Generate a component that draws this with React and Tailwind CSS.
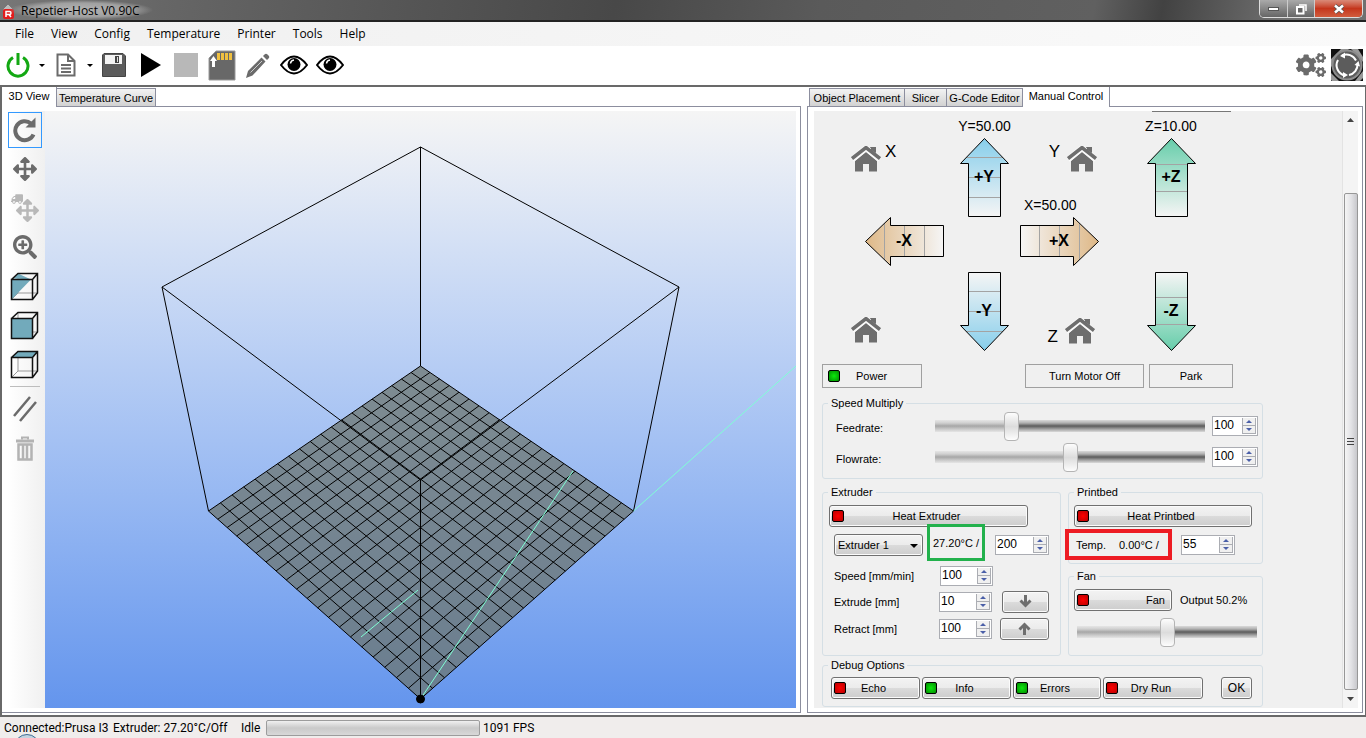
import { useState } from 'react';
import { FaArrowsAlt, FaCogs, FaSearchPlus, FaTruck } from 'react-icons/fa';

const MENU_ITEMS = ['File', 'View', 'Config', 'Temperature', 'Printer', 'Tools', 'Help'];

const AERO =
  'rounded-[3px] border border-[#707070] bg-[linear-gradient(#f3f3f3_0%,#ebebeb_50%,#dbdbdb_50%,#cdcdcd_100%)] shadow-[inset_0_0_0_1px_#fbfbfb]';

// Print bed corners on the canvas: front, right, back, left
const BED = [[375.5, 588], [588.5, 400], [375.5, 255], [163.5, 400]];

// Perspective map from the unit square to the bed quad
function project(u, v) {
  const [[x0, y0], [x1, y1], [x2, y2], [x3, y3]] = BED;
  const dx1 = x1 - x2;
  const dx2 = x3 - x2;
  const dx3 = x0 - x1 + x2 - x3;
  const dy1 = y1 - y2;
  const dy2 = y3 - y2;
  const dy3 = y0 - y1 + y2 - y3;
  const det = dx1 * dy2 - dx2 * dy1;
  const g = (dx3 * dy2 - dx2 * dy3) / det;
  const h = (dx1 * dy3 - dx3 * dy1) / det;
  const w = g * u + h * v + 1;
  return [
    ((x1 - x0 + g * x1) * u + (x3 - x0 + h * x3) * v + x0) / w,
    ((y1 - y0 + g * y1) * u + (y3 - y0 + h * y3) * v + y0) / w,
  ];
}

const GRID = Array.from({ length: 21 }).flatMap((_, i) => {
  const t = i / 20;
  return [
    [project(t, 0), project(t, 1)],
    [project(0, t), project(1, t)],
  ];
});

function Viewport() {
  return (
    <div className="min-w-0 flex-1 bg-linear-to-b from-[#f5f5f5] to-[#6495ed]">
      <svg viewBox="0 0 751 597" className="block w-full" stroke="#000" fill="none">
        <polygon points={BED.map((p) => p.join(',')).join(' ')} fill="#6c7570" fillOpacity="0.75" stroke="none" />
        {GRID.map(([a, b], i) => (
          <line key={i} x1={a[0]} y1={a[1]} x2={b[0]} y2={b[1]} />
        ))}
        <path d="M375.5 36 L117 176 L375.5 369 L634 176 Z M375.5 36 V255 M117 176 L163.5 400 M634 176 L588.5 400 M375.5 369 V588" />
        <path d="M588.5 400 L751 255 M375.5 588 L528 360 M316 526 L373 479" stroke="#7fffd4" />
        <circle cx="375.5" cy="588" r="4" fill="#000" />
      </svg>
    </div>
  );
}

function Home() {
  return (
    <svg width="30" height="26" viewBox="0 0 30 26" fill="#6e6e6e">
      <path d="M19 1 h6 v9 l-6 -5z" />
      <path d="M15 6 L26 15 V25.500 H18 V18 H12 V25.500 H4 V15 Z" />
      <path d="M1 13.500 L15 2 L29 13.500" fill="none" stroke="#fafafa" strokeWidth="6" />
      <path d="M1 12.500 L15 1.500 L29 12.500" fill="none" stroke="#6e6e6e" strokeWidth="3.500" />
      <path d="M20 1 h5 v6 l-5 -3z" />
    </svg>
  );
}

function HomeButton({ axis, className = '', labelClass = '', before = false }) {
  return (
    <button type="button" aria-label={`Home ${axis}`} className={`flex gap-[4px] ${className}`}>
      {before && <span className={`text-[17px] leading-5 ${labelClass}`}>{axis}</span>}
      <Home />
      {!before && axis !== 'all' && <span className={`text-[17px] leading-5 ${labelClass}`}>{axis}</span>}
    </button>
  );
}

const UP = '24.5,0.5 48.5,25.5 40.5,25.5 40.5,78.5 8.5,78.5 8.5,25.5 0.5,25.5';
const DOWN = '24.5,78.5 48.5,53.5 40.5,53.5 40.5,0.5 8.5,0.5 8.5,53.5 0.5,53.5';
const LEFT = '0.5,24.5 25.5,0.5 25.5,8.5 78.5,8.5 78.5,39.5 25.5,39.5 25.5,48.5';
const RIGHT = '78.5,24.5 53.5,0.5 53.5,8.5 0.5,8.5 0.5,39.5 53.5,39.5 53.5,48.5';

function Jog({ dir, label, color, marks, id }) {
  const vertical = dir === 'up' || dir === 'down';
  const points = { up: UP, down: DOWN, left: LEFT, right: RIGHT }[dir];
  const w = vertical ? 49 : 79;
  const h = vertical ? 79 : 49;
  const reversed = dir === 'down' || dir === 'right';
  const ends = reversed ? ['#f5f5f5', color] : [color, '#f5f5f5'];
  return (
    <button type="button" aria-label={`Move ${label}`} className="block">
      <svg width={w} height={h} viewBox={`0 0 ${w} ${h}`}>
        <defs>
          <linearGradient id={id} x1="0" y1="0" x2={vertical ? 0 : 1} y2={vertical ? 1 : 0}>
            <stop offset="0" stopColor={ends[0]} />
            <stop offset="1" stopColor={ends[1]} />
          </linearGradient>
          <clipPath id={`${id}-clip`}>
            <polygon points={points} />
          </clipPath>
        </defs>
        <polygon points={points} fill={`url(#${id})`} />
        <g clipPath={`url(#${id}-clip)`} stroke="#a3a3a3">
          {marks.map((m) =>
            vertical ? (
              <line key={m} x1="0" x2="49" y1={m + 0.5} y2={m + 0.5} />
            ) : (
              <line key={m} y1="0" y2="49" x1={m + 0.5} x2={m + 0.5} />
            ),
          )}
        </g>
        <polygon points={points} fill="none" stroke="#000" />
        <text x={vertical ? 24 : 39} y={vertical ? 44 : 29} textAnchor="middle" fontSize="16" fontWeight="700">
          {label}
        </text>
      </svg>
    </button>
  );
}

function Led({ on = false }) {
  return (
    <span
      className={`size-3 shrink-0 rounded-[2px] border border-black ${
        on ? 'bg-[radial-gradient(#0ce80c,#008c00)]' : 'bg-[radial-gradient(#ff0000,#b80000)]'
      }`}
    />
  );
}

function LedButton({ on, children, className = '' }) {
  return (
    <button type="button" className={`flex h-[22px] items-center pr-[18px] pl-[2px] ${AERO} ${className}`}>
      <Led on={on} />
      <span className="flex-1 text-center">{children}</span>
    </button>
  );
}

function Spin({ label, value, className = '' }) {
  const [text, setText] = useState(value);
  const step = (n) => setText(String(Number(text) + n));
  return (
    <div className={`flex h-5 shrink-0 border border-[#abadb3] bg-white ${className}`}>
      <input
        aria-label={label}
        value={text}
        onChange={(e) => setText(e.target.value)}
        className="h-4 w-0 min-w-0 flex-1 bg-transparent pl-px text-[12px] outline-none"
      />
      <div className="m-px flex w-[14px] flex-col border border-t-0 border-[#abadb3] bg-[#f0f0f0]">
        <button type="button" aria-label={`${label} up`} onClick={() => step(1)} className="flex flex-1 items-center justify-center border-b border-[#abadb3]">
          <svg width="6" height="3" viewBox="0 0 6 3" fill="#4a5fa8"><path d="M0 3 L3 0 L6 3z" /></svg>
        </button>
        <button type="button" aria-label={`${label} down`} onClick={() => step(-1)} className="flex flex-1 items-center justify-center">
          <svg width="6" height="3" viewBox="0 0 6 3" fill="#4a5fa8"><path d="M0 0 L3 3 L6 0z" /></svg>
        </button>
      </div>
    </div>
  );
}

function Slider({ id, label, initial, className = '' }) {
  const [value, setValue] = useState(initial);
  return (
    <input
      id={id}
      aria-label={label}
      type="range"
      value={value}
      onChange={(e) => setValue(Number(e.target.value))}
      style={{ '--pos': `${value}%` }}
      className={`h-[29px] shrink-0 appearance-none bg-transparent [&::-webkit-slider-runnable-track]:h-3 [&::-webkit-slider-runnable-track]:bg-[linear-gradient(to_right,rgba(240,240,240,0.5)_var(--pos),transparent_var(--pos)),linear-gradient(#dadada,#b0b0b0_25%,#5c5c5c_50%,#a0a0a0_75%,#dadada)] [&::-webkit-slider-thumb]:-mt-2 [&::-webkit-slider-thumb]:h-[29px] [&::-webkit-slider-thumb]:w-[15px] [&::-webkit-slider-thumb]:appearance-none [&::-webkit-slider-thumb]:rounded-[4px] [&::-webkit-slider-thumb]:border [&::-webkit-slider-thumb]:border-[#b4b4b4] [&::-webkit-slider-thumb]:bg-[linear-gradient(#fdfdfd,#dcdcdc_50%,#fdfdfd)] ${className}`}
    />
  );
}

function Group({ title, className = '', children }) {
  return (
    <fieldset className={`min-w-0 rounded-[3px] border border-[#d5dfe5] ${className}`}>
      <legend className="ml-[5px] h-[14px] px-[3px] leading-[14px]">{title}</legend>
      {children}
    </fieldset>
  );
}

function Tab({ children, active = false, className = '' }) {
  return (
    <button
      type="button"
      role="tab"
      aria-selected={active}
      className={`border-[#8c8e9e] text-center whitespace-nowrap ${
        active
          ? 'relative z-10 -mb-px h-5 border-r bg-white pb-[3px]'
          : 'h-[18px] border-t border-r border-l bg-linear-to-b from-[#f3f3f3] to-[#d2d2d2]'
      } ${className}`}
    >
      {children}
    </button>
  );
}

function Eye() {
  return (
    <svg width="28" height="20" viewBox="0 0 28 20">
      <path d="M1 10 Q14 -7 27 10 Q14 27 1 10Z" fill="#fff" stroke="#000" strokeWidth="2" />
      <circle cx="14" cy="9.500" r="6.500" />
      <path d="M10.500 8.500 A4 4 0 0 1 14 5" fill="none" stroke="#fff" strokeWidth="1.500" />
    </svg>
  );
}

function Caret() {
  return (
    <svg width="6" height="3" viewBox="0 0 6 3"><path d="M0 0 H6 L3 3z" /></svg>
  );
}

function Cube({ shade }) {
  return (
    <svg width="29" height="29" viewBox="0 0 29 29" fill="none">
      <path d="M8 1.500 V21 H28 M8 21 L1.500 27.500" stroke="#999" />
      <path d={shade} fill="#72aabb" />
      <path d="M1.500 7.500 H22.500 V27.500 H1.500Z M1.500 7.500 L8 1.500 H27.500 V21 L22.500 27.500 M22.500 7.500 L27.500 1.500" stroke="#111" strokeWidth="1.500" />
    </svg>
  );
}

function Estop() {
  return (
    <svg width="32" height="32" viewBox="0 0 32 32">
      <rect width="32" height="32" fill="#111" />
      <path d="M0 10 L10 0 H18 L0 18z M20 0 H27 L32 8 V13z M0 24 L8 32 H1 L0 31z M24 32 L32 22 V29 L29 32z" fill="#999" />
      <circle cx="16" cy="16" r="14.500" fill="#5c5c5c" stroke="#8c8c8c" strokeWidth="2" />
      <g fill="none" stroke="#fff" strokeWidth="2">
        <path d="M11 6.500 A10.500 10.500 0 0 1 25 11.500" />
        <path d="M26.500 15 A10.500 10.500 0 0 1 18 26" />
        <path d="M14 26.500 A10.500 10.500 0 0 1 7 11" />
      </g>
      <path d="M9 7 L14 3.500 V9.500z M27.500 12 L29 17.500 L23.500 16z M12 23 L17 26 L12 29z" fill="#fff" />
    </svg>
  );
}

function TitleBar() {
  return (
    <header className="flex h-[22px] items-start border-b-2 border-[#222] bg-[linear-gradient(100deg,#777_0%,#666_12%,#555_30%,#484848_45%,#5a5a5a_60%,#606060_80%,#424242_85%,#707070_94%)]">
      <svg width="14" height="16" viewBox="0 0 14 16" className="mt-1 ml-px">
        <path d="M2 5 L7 0 L12 5 V13 H2Z" fill="#bbb" stroke="#777" />
        <rect x="2" y="5" width="11" height="10" rx="2" fill="#e31b1b" />
        <path d="M5 13 V7.500 H8.500 Q10 7.500 10 9 Q10 10.500 8.500 10.500 H5 M8 10.500 L10 13" fill="none" stroke="#fff" strokeWidth="1.500" />
      </svg>
      <h1 className="-ml-[7px] bg-[radial-gradient(closest-side,#b4b4b4,#a0a0a0_70%,transparent)] px-[13px] pt-[2px] font-['Open_Sans',sans-serif] text-[12px] leading-[18px] text-black">
        Repetier-Host V0.90C
      </h1>
      <div className="mr-[3px] ml-auto flex h-[18px] overflow-hidden rounded-b-[5px] border border-t-0 border-[#ddd]">
        <button type="button" aria-label="Minimize" className="flex w-7 items-center justify-center border-r border-[#ccc] bg-linear-to-b from-[#aaa] to-[#666]">
          <svg width="11" height="4" viewBox="0 0 11 4"><rect x="0.500" y="0.500" width="10" height="3" fill="#fff" stroke="#555" /></svg>
        </button>
        <button type="button" aria-label="Restore" className="flex w-[27px] items-center justify-center border-r border-[#ccc] bg-linear-to-b from-[#aaa] to-[#666]">
          <svg width="12" height="12" viewBox="0 0 12 12" fill="#666" stroke="#fff" strokeWidth="2">
            <path d="M4 2 H11 V8" fill="none" strokeWidth="1.500" />
            <rect x="2" y="4" width="6.500" height="6.500" />
          </svg>
        </button>
        <button type="button" aria-label="Close" className="flex w-[47px] items-center justify-center bg-linear-to-b from-[#d98a78] via-[#c4351b] to-[#d15c3d]">
          <svg width="12" height="10" viewBox="0 0 12 10">
            <path d="M2 1.500 L10 8.500 M10 1.500 L2 8.500" stroke="#555" strokeWidth="4" />
            <path d="M2 1.500 L10 8.500 M10 1.500 L2 8.500" stroke="#fff" strokeWidth="2.500" />
          </svg>
        </button>
      </div>
    </header>
  );
}

function Toolbar() {
  return (
    <div className="flex h-[38px] items-center pl-[6px]">
      <button type="button" aria-label="Connect">
        <svg width="24" height="26" viewBox="0 0 24 26" fill="none" stroke="#13a813" strokeWidth="3">
          <path d="M7 5.500 A10 10 0 1 0 17 5.500 M12 1 V13" />
        </svg>
      </button>
      <button type="button" aria-label="Connect options" className="ml-[9px]"><Caret /></button>
      <button type="button" aria-label="Load" className="ml-[11px]">
        <svg width="20" height="24" viewBox="0 0 20 24" fill="none" stroke="#6b6b6b" strokeWidth="2">
          <path d="M1.500 1.500 H12 L18.500 8 V22.500 H1.500Z M12 1.500 V8 H18.500 M5 12 H15 M5 15.500 H15 M5 19 H15" />
        </svg>
      </button>
      <button type="button" aria-label="Load options" className="ml-[11px]"><Caret /></button>
      <button type="button" aria-label="Save" className="ml-[9px]">
        <svg width="24" height="24" viewBox="0 0 24 24">
          <path d="M2 0.500 H21 L23.500 3 V23.500 H0.500 V2Z" fill="#5c5c5c" stroke="#444" />
          <rect x="3" y="2" width="17" height="9" fill="#f4f4f4" />
          <rect x="13" y="3" width="4" height="7" fill="#444" />
          <rect x="15" y="4" width="1" height="5" fill="#ddd" />
        </svg>
      </button>
      <button type="button" aria-label="Run" className="ml-[15px]">
        <svg width="20" height="24" viewBox="0 0 20 24"><path d="M0 0 L20 12 L0 24z" /></svg>
      </button>
      <button type="button" aria-label="Stop" className="ml-[13px] size-6 bg-[#b8b8b8]" />
      <button type="button" aria-label="SD card" className="ml-[10px]">
        <svg width="28" height="31" viewBox="0 0 28 31">
          <path d="M8 1 H27 V30 H1 V8Z" fill="#686868" stroke="#999" />
          <path d="M10.500 3 V10 M14.500 3 V10 M18.500 3 V10 M22.500 3 V10" stroke="#f0c040" strokeWidth="3" />
          <path d="M5.500 6 L9 11 H7 V17 H4 V11 H2z" fill="#fff" />
        </svg>
      </button>
      <button type="button" aria-label="Edit" className="ml-[10px]">
        <svg width="24" height="25" viewBox="0 0 24 25" fill="#6b6b6b">
          <path d="M0 25 L2 18 L15.500 4.500 L19.500 8.500 L6.500 22.500z M17 3 L18.500 1.500 Q20 0 21.500 1.500 L22.500 2.500 Q24 4 22.500 5.500 L21 7z" />
          <path d="M4.500 19.500 L16 8" stroke="#ccc" />
        </svg>
      </button>
      <button type="button" aria-label="Show filament" className="ml-[10px]"><Eye /></button>
      <button type="button" aria-label="Show travel" className="ml-2"><Eye /></button>
      <button type="button" aria-label="Printer settings" className="mr-[5px] ml-auto text-[#6b6b6b]"><FaCogs size={30} /></button>
      <button type="button" aria-label="Emergency stop" className="mr-[3px]"><Estop /></button>
    </div>
  );
}

function ViewTools() {
  const item = 'flex h-9 w-[33px] items-center justify-center';
  return (
    <div className="flex w-[37px] shrink-0 flex-col gap-[3px] bg-linear-to-r from-white to-[#f0f0f0] pt-px text-[#6b6b6b]">
      <button type="button" aria-label="Rotate" className="flex h-9 w-[34px] items-center justify-center border border-[#3399ff]">
        <svg width="24" height="26" viewBox="0 0 24 26">
          <path d="M20.500 17.500 A9.500 9.500 0 1 1 18 6.500" fill="none" stroke="currentColor" strokeWidth="4" />
          <path d="M22.500 0.500 V10.500 H12.500z" fill="currentColor" />
        </svg>
      </button>
      <button type="button" aria-label="Move camera" className={item}><FaArrowsAlt size={24} /></button>
      <button type="button" aria-label="Move object" className={`${item} relative text-[#b8b8b8]`}>
        <FaTruck size={12} className="absolute top-[3px] left-[3px] -scale-x-100" />
        <FaArrowsAlt size={23} className="mt-1 ml-[6px]" />
      </button>
      <button type="button" aria-label="Zoom" className={item}><FaSearchPlus size={24} /></button>
      <button type="button" aria-label="Isometric view" className={item}>
        <Cube shade="M1.500 7.500 H21 L1.500 27.500Z M3 6.500 L8 1.500 L21 7.500Z" />
      </button>
      <button type="button" aria-label="Front view" className={item}><Cube shade="M1.500 7.500 H22.500 V27.500 H1.500Z" /></button>
      <button type="button" aria-label="Top view" className={item}><Cube shade="M1.500 7.500 L8 1.500 H27.500 L22.500 7.500Z" /></button>
      <hr className="my-px ml-[2px] w-[30px] border-[#bdbdbd]" />
      <button type="button" aria-label="Parallel projection" className={item}>
        <svg width="24" height="26" viewBox="0 0 24 26" stroke="currentColor" strokeWidth="2.500">
          <path d="M1 20 L17 1 M7 25 L23 6" />
        </svg>
      </button>
      <button type="button" aria-label="Delete" className={`${item} text-[#b3b3b3]`}>
        <svg width="18" height="25" viewBox="0 0 18 25" fill="none" stroke="currentColor">
          <path d="M0 5 H18" strokeWidth="3" />
          <path d="M6 3.500 V1.500 H12 V3.500" strokeWidth="2" />
          <path d="M2.500 8.500 V23.500 H15.500 V8.500Z M7 9 V23 M11 9 V23" strokeWidth="2.500" />
        </svg>
      </button>
    </div>
  );
}

function JogPanel() {
  return (
    <div className="flex h-[252px] pl-[29px] text-[14px]">
      <div className="flex w-[93px] flex-col pt-[34px]">
        <HomeButton axis="X" labelClass="-mt-1" />
        <div className="mt-[45px] self-end">
          <Jog dir="left" label="-X" color="#deb887" marks={[19, 39, 59]} id="xm" />
        </div>
        <HomeButton axis="all" className="mt-[51px]" />
      </div>
      <div className="ml-[5px] flex w-[71px] flex-col items-center pt-1">
        <p className="mb-[2px] leading-5">Y=50.00</p>
        <Jog dir="up" label="+Y" color="#87ceeb" marks={[19, 39, 59]} id="yp" />
        <div className="mt-[55px]">
          <Jog dir="down" label="-Y" color="#87ceeb" marks={[19, 39, 59]} id="ym" />
        </div>
      </div>
      <div className="flex w-[80px] flex-col pt-[34px]">
        <HomeButton axis="Y" before className="mr-[3px] self-end" labelClass="-mt-1 mr-[3px]" />
        <p className="mt-[23px] ml-1 leading-5">X=50.00</p>
        <div className="mt-[2px]">
          <Jog dir="right" label="+X" color="#deb887" marks={[19, 39, 59]} id="xp" />
        </div>
        <HomeButton axis="Z" before className="mt-[52px] mr-[5px] self-end" labelClass="mt-[9px] mr-[3px]" />
      </div>
      <div className="ml-[41px] flex w-[60px] flex-col items-center pt-1">
        <p className="mb-[2px] leading-5">Z=10.00</p>
        <Jog dir="up" label="+Z" color="#66cdaa" marks={[26, 53]} id="zp" />
        <div className="mt-[55px]">
          <Jog dir="down" label="-Z" color="#66cdaa" marks={[25, 52]} id="zm" />
        </div>
      </div>
    </div>
  );
}

function ExtruderGroup() {
  return (
    <Group title="Extruder" className="h-[171px] w-[239px]">
      <LedButton className="mt-[6px] ml-[6px] w-[199px]">Heat Extruder</LedButton>
      <div className="-mt-[3px] flex h-[37px] items-center">
        <div className={`relative mt-1 ml-[11px] h-[22px] w-[89px] ${AERO}`}>
          <select aria-label="Extruder" className="h-full w-full appearance-none pl-[3px] leading-5">
            <option>Extruder 1</option>
          </select>
          <svg width="8" height="4" viewBox="0 0 8 4" className="pointer-events-none absolute top-[9px] right-1"><path d="M0 0 H8 L4 4z" /></svg>
        </div>
        <output className="ml-1 flex h-[37px] w-[58px] items-center justify-center border-[3px] border-[#22b14c] whitespace-nowrap">
          27.20°C /
        </output>
        <Spin label="Extruder target" value="200" className="mt-1 ml-[10px] w-[54px]" />
      </div>
      <div className="mt-[2px] flex h-[26px] items-center pl-[11px]">
        <span className="w-[106px]">Speed [mm/min]</span>
        <Spin label="Speed" value="100" className="w-[53px]" />
      </div>
      <div className="flex h-[25px] items-center pl-[11px]">
        <span className="w-[105px]">Extrude [mm]</span>
        <Spin label="Extrude" value="10" className="w-[53px]" />
        <button type="button" aria-label="Extrude now" className={`ml-[10px] flex h-[22px] w-[47px] items-center justify-center ${AERO}`}>
          <svg width="13" height="13" viewBox="0 0 13 13" fill="none" stroke="#6e6e6e" strokeWidth="3"><path d="M6.500 0 V10 M1.500 5.500 L6.500 10.500 L11.500 5.500" /></svg>
        </button>
      </div>
      <div className="flex h-[29px] items-center pl-[11px]">
        <span className="w-[105px]">Retract [mm]</span>
        <Spin label="Retract" value="100" className="w-[53px]" />
        <button type="button" aria-label="Retract now" className={`ml-2 flex h-[22px] w-[49px] items-center justify-center ${AERO}`}>
          <svg width="13" height="13" viewBox="0 0 13 13" fill="none" stroke="#6e6e6e" strokeWidth="3"><path d="M6.500 13 V3 M1.500 7.500 L6.500 2.500 L11.500 7.500" /></svg>
        </button>
      </div>
    </Group>
  );
}

function ManualControl() {
  return (
    <div className="flex min-w-0 flex-1 flex-col bg-[#f0f0f0] pl-2">
      <div className="ml-[330px] h-px w-[79px] bg-[#777]" />
      <JogPanel />
      <div className="flex h-6">
        <button type="button" className="flex w-[100px] items-center border border-[#a0a0a0] pl-[5px]">
          <Led on />
          <span className="ml-4">Power</span>
        </button>
        <button type="button" className="ml-[103px] w-[119px] border border-[#a0a0a0]">Turn Motor Off</button>
        <button type="button" className="ml-[5px] w-[84px] border border-[#a0a0a0]">Park</button>
      </div>

      <Group title="Speed Multiply" className="mt-2 h-[83px] w-[441px]">
        <div className="flex h-[31px] items-center pl-[13px]">
          <label htmlFor="feedrate" className="w-[99px] pt-1">Feedrate:</label>
          <Slider id="feedrate" label="Feedrate" initial={27} className="w-[270px]" />
          <Spin label="Feedrate percent" value="100" className="ml-[7px] w-[46px]" />
        </div>
        <div className="flex h-[31px] items-center pl-[13px]">
          <label htmlFor="flowrate" className="w-[99px] pt-1">Flowrate:</label>
          <Slider id="flowrate" label="Flowrate" initial={50} className="w-[270px]" />
          <Spin label="Flowrate percent" value="100" className="ml-[7px] w-[46px]" />
        </div>
      </Group>

      <div className="mt-[6px] flex gap-[7px]">
        <ExtruderGroup />
        <div className="w-[195px]">
          <Group title="Printbed" className="h-[79px]">
            <LedButton className="mt-[6px] ml-[5px] w-[178px]">Heat Printbed</LedButton>
            <div className="mt-[2px] flex items-center">
              <div className="-ml-1 flex h-[31px] w-[107px] items-center border-4 border-[#ed1c24] pl-[7px] whitespace-nowrap">
                <span className="w-[43px]">Temp.</span>
                <output>0.00°C /</output>
              </div>
              <Spin label="Printbed target" value="55" className="ml-[9px] w-[54px]" />
            </div>
          </Group>
          <Group title="Fan" className="mt-[5px] h-[87px]">
            <div className="mt-[6px] ml-[5px] flex items-center gap-2">
              <button type="button" className={`flex h-[22px] w-[98px] items-center justify-between pr-[6px] pl-[2px] ${AERO}`}>
                <Led />
                Fan
              </button>
              <span>Output 50.2%</span>
            </div>
            <Slider id="fan" label="Fan output" initial={50} className="mt-[6px] ml-2 w-[180px]" />
          </Group>
        </div>
      </div>

      <Group title="Debug Options" className="mt-[2px] h-[49px] w-[441px]">
        <div className="mt-[5px] ml-2 flex gap-[2px]">
          <LedButton className="w-[89px]">Echo</LedButton>
          <LedButton on className="w-[89px]">Info</LedButton>
          <LedButton on className="w-[88px]">Errors</LedButton>
          <LedButton className="w-[100px]">Dry Run</LedButton>
          <button type="button" className={`ml-4 h-[22px] w-[31px] text-[12px] ${AERO}`}>OK</button>
        </div>
      </Group>
    </div>
  );
}

function Scrollbar() {
  return (
    <div className="flex w-4 shrink-0 flex-col items-center border-l border-[#e3e3e3] bg-[#f4f4f4]">
      <button type="button" aria-label="Scroll up" className="flex h-[17px] items-center">
        <svg width="7" height="4" viewBox="0 0 7 4" fill="#444"><path d="M0 4 L3.500 0 L7 4z" /></svg>
      </button>
      <div className="mt-[65px] flex w-[14px] flex-1 flex-col items-center justify-center gap-[2px] rounded-[2px] border border-[#979797] bg-linear-to-r from-[#f5f5f5] via-[#e3e3e6] to-[#c8c8cc]">
        <span className="h-px w-[7px] bg-[#444]" />
        <span className="h-px w-[7px] bg-[#444]" />
        <span className="h-px w-[7px] bg-[#444]" />
      </div>
      <button type="button" aria-label="Scroll down" className="flex h-[18px] items-center">
        <svg width="7" height="4" viewBox="0 0 7 4" fill="#444"><path d="M0 0 H7 L3.500 4z" /></svg>
      </button>
    </div>
  );
}

export default function App() {
  return (
    <div className="flex min-h-screen flex-col overflow-hidden bg-white font-['Liberation_Sans',Arial,sans-serif] text-[11px] leading-[14px] text-black">
      <TitleBar />
      <nav className="flex h-6 items-center gap-[17px] bg-linear-to-r from-[#f0f0f0] to-[#fafafa] pl-[15px] font-['Open_Sans',sans-serif] text-[12px]">
        {MENU_ITEMS.map((item) => (
          <button key={item} type="button">{item}</button>
        ))}
      </nav>
      <Toolbar />

      <main className="mt-px flex flex-1 border-2 border-r border-[#696969]">
        <section className="flex min-w-0 flex-1 flex-col">
          <div role="tablist" className="flex h-[19px] items-end">
            <Tab active className="w-[55px]">3D View</Tab>
            <Tab className="w-[99px] border-l-0">Temperature Curve</Tab>
          </div>
          <div className="mb-[2px] flex flex-1 border-t border-r border-b border-[#8c8e9e] pt-1 pr-1 pb-1 pl-[6px]">
            <ViewTools />
            <Viewport />
          </div>
        </section>

        <section className="ml-[6px] flex w-[556px] shrink-0 flex-col">
          <div role="tablist" className="flex h-[19px] items-end pl-[2px]">
            <Tab className="w-[96px]">Object Placement</Tab>
            <Tab className="w-[42px] border-l-0">Slicer</Tab>
            <Tab className="w-[76px] border-l-0">G-Code Editor</Tab>
            <Tab active className="w-[87px] border-t-0">Manual Control</Tab>
          </div>
          <div className="mb-[2px] flex flex-1 border border-[#8c8e9e] pt-1 pr-1 pb-1 pl-[6px]">
            <ManualControl />
            <Scrollbar />
          </div>
        </section>
        <div className="w-[2px] shrink-0" />
      </main>

      <footer className="flex h-[22px] items-center overflow-hidden bg-[#f0edec] pl-1 font-[Roboto,sans-serif] text-[12px]">
        <span className="relative w-[109px] whitespace-nowrap">
          Connected:Prusa I3
          <span className="absolute top-[13px] left-[10px] size-[26px] rounded-full border border-[#3c6c94] bg-[#c3d3e0]" />
        </span>
        <span className="w-[128px] whitespace-nowrap">Extruder: 27.20°C/Off</span>
        <span className="w-[25px]">Idle</span>
        <div
          role="progressbar"
          aria-label="Job progress"
          className="h-4 w-[214px] rounded-[2px] border border-[#9c9c9c] bg-linear-to-b from-[#f0f0f0] via-[#c9c9c9] to-[#d8d8d8]"
        />
        <span className="ml-[3px]">1091 FPS</span>
      </footer>
    </div>
  );
}
